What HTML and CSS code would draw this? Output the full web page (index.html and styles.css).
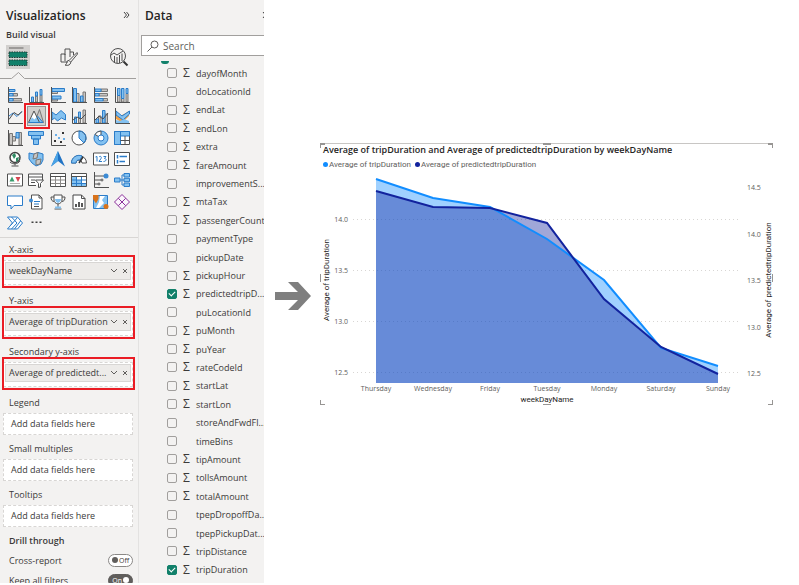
FILE: index.html
```
<!DOCTYPE html>
<html lang="en">
<head>
  <meta charset="UTF-8">
  <title>Power BI - Average of tripDuration by weekDayName</title>
  <link rel="stylesheet" href="styles.css">
</head>
<body>
  <div class="app">
    <section class="pane viz">
      <div class="pane-head">
        <h2>Visualizations</h2>
        <button class="collapse" aria-label="Collapse">
          <svg width="7" height="8" viewBox="0 0 7 8"><path d="M1 1l2.500 3L1 7M3.500 1L6 4 3.500 7"/></svg>
        </button>
      </div>
      <h3>Build visual</h3>
      <div class="tabs">
        <button class="on" aria-label="Build visual">
          <svg width="24" height="24" viewBox="0 0 24 24">
            <path d="M3 3h14.500" stroke="#8a8886" stroke-width="1.500"/>
            <path d="M3 7h18v5.500H3zM3 15h18v5.500H3z" fill="#11806a" stroke="#1f3d36" stroke-dasharray="1.500 1"/>
          </svg>
        </button>
        <button aria-label="Format visual">
          <svg width="20" height="20" viewBox="0 0 20 20">
            <path class="k" d="M9 15H2V7h4v7M6 8V2h5v8M11 5h3.500v3"/>
            <path class="k" d="M18 5.500l-8 8 1.700 1.700L18.500 7zM10 13.500c-2-.2-2.300 1.500-2.500 3-.1 1-1 1.500-1.500 1.500 3 1 5.700 0 5.700-2.800"/>
          </svg>
        </button>
        <button aria-label="Analytics">
          <svg width="20" height="20" viewBox="0 0 20 20">
            <circle class="k" cx="9" cy="9" r="7.500"/>
            <path class="k" d="M2 8l3-2 3 2 6-4M5.500 9v6M8 10v6M10.500 8v8M13 6.500v7.500"/>
            <path d="M14.500 14.500l4 4" stroke="#333" stroke-width="2"/>
          </svg>
        </button>
      </div>
      <svg class="notch" width="136" height="8" viewBox="0 0 136 8"><path d="M0 6.500h11.500l7-6 6 6H136"/></svg>

      <div class="gallery">
        <button aria-label="Stacked bar chart"><svg viewBox="0 0 16 16"><path class="g" d="M6 6.500h4.500v2.500H6zM6 11.500h8.500v2.500H6z"/><path class="b" d="M2 2.500h6v2H2zM2 6.500h4v2.500H2zM2 11.500h4v2.500H2z"/><path class="k" d="M1.500 0v15.500H16"/></svg></button>
        <button aria-label="Stacked column chart"><svg viewBox="0 0 16 16"><path class="g" d="M7.500 9h2v6h-2zM12 8h2v7h-2z"/><path class="b" d="M3.500 10h2v5h-2zM7.500 5h2v4h-2zM12 2.500h2V8h-2z"/><path class="k" d="M1.500 0v15.500H16"/></svg></button>
        <button aria-label="Clustered bar chart"><svg viewBox="0 0 16 16"><path class="g" d="M2 4.500h5.500v2H2zM2 12h5.500v2H2z"/><path class="b" d="M2 1.500h12.500v3H2zM2 9h9v3H2z"/><path class="k" d="M1.500 0v15.500H16"/></svg></button>
        <button aria-label="Clustered column chart"><svg viewBox="0 0 16 16"><path class="g" d="M5.500 6.500H8V15H5.500zM12 5h2.500v10H12z"/><path class="b" d="M2.500 1.500h3V15h-3zM9.500 9H12v6H9.500z"/><path class="k" d="M1.500 0v15.500H16"/></svg></button>
        <button aria-label="100% stacked bar chart"><svg viewBox="0 0 16 16"><path class="g" d="M8 2h6.500v2.500H8zM6 6.500h8.500V9H6zM10 11.500h4.500v2.500H10z"/><path class="b" d="M2 2h6v2.500H2zM2 6.500h4V9H2zM2 11.500h8v2.500H2z"/><path class="k" d="M1.500 0v15.500H16"/></svg></button>
        <button aria-label="100% stacked column chart"><svg viewBox="0 0 16 16"><path class="g" d="M3.500 8.500h2.500V15H3.500zM7.500 11.500H10V15H7.500zM12 6.500h2V15h-2z"/><path class="b" d="M3.500 1.500h2.500v7H3.500zM7.500 1.500H10v10H7.500zM12 1.500h2v5h-2z"/><path class="k" d="M1.500 0v15.500H16"/></svg></button>

        <button aria-label="Line chart"><svg viewBox="0 0 16 16"><path class="l" d="M2 8l4-3 4 3.500 5-5"/><path class="k" d="M1.500 0v15.500H16M2 11.500l5-7 4 2.500 4-3.500"/></svg></button>
        <button class="on" aria-label="Area chart"><svg viewBox="0 0 16 16"><path class="g" d="M6.500 14.500l5-13 4 13z"/><path d="M.5 14.500l5.500-11.500 5.500 11.500z" fill="#fff"/><path class="f" d="M.5 14.500L4 9.500l2.500 2 3-3.500 5.500 6.500z"/><path class="k" d="M.5 14.500l5.500-11.500 5.500 11.500"/><path class="l" d="M.5 14.500h14.500L9.500 8"/></svg></button>
        <button aria-label="Stacked area chart"><svg viewBox="0 0 16 16"><path class="b" d="M2 4l4 3 5-4.500 4.500 4V12l-4-2-4 3-3-3L2 12z"/><path class="k" d="M1.500 0v15.500H16"/></svg></button>
        <button aria-label="Line and stacked column chart"><svg viewBox="0 0 16 16"><path class="g" d="M7.500 10h2v5h-2zM12 2h2.500v13H12z"/><path class="b" d="M3.500 9h2v6h-2zM7.500 4h2v6h-2z"/><path class="k" d="M1.500 0v15.500H16M2 12l4-3 4 2 5-5"/></svg></button>
        <button aria-label="Line and clustered column chart"><svg viewBox="0 0 16 16"><path class="g" d="M5.500 8H8v7H5.500zM12 6h2.500v9H12z"/><path class="b" d="M3 11h2.500v4H3zM9.500 2.500H12V15H9.500z"/><path class="k" d="M1.500 0v15.500H16M2 12l4-4 4 3 5-6"/></svg></button>
        <button aria-label="Ribbon chart"><svg viewBox="0 0 16 16"><path d="M2 5l4 3 4-2 5-3v5l-4 4-4 2-5-3z" fill="#f0a046"/><path class="b" d="M2 3l6 5 7.500-5v3L9 12 2 7z"/><path class="f" d="M2 12l4 1 4-2 5 2v2H2z"/><path class="k" d="M1.500 0v15.500H16"/></svg></button>

        <button aria-label="Waterfall chart"><svg viewBox="0 0 16 16"><path class="g" d="M2.500 3.500h3V15h-3zM5.500 6.500h3V11h-3zM12 2.500h2.500V15H12z"/><path class="b" d="M9 2.500h3V8H9z"/><path class="k" d="M1.500 0v15.500H16"/></svg></button>
        <button aria-label="Funnel"><svg viewBox="0 0 16 16"><path class="b" d="M.5 1.500h15v4H.5zM3.500 5.500h9V9h-9zM5.500 9h5v5.500h-5z"/></svg></button>
        <button aria-label="Scatter chart"><svg viewBox="0 0 16 16"><path class="k" d="M1.500 0v15.500H16"/><path d="M4 10h2v2H4zM12 2h2v2h-2zM10 11h2v2h-2z" fill="#333"/><path d="M5 4h2v2H5zM8 7h2v2H8zM13 8h2v2h-2z" fill="#6aaee8"/></svg></button>
        <button aria-label="Pie chart"><svg viewBox="0 0 16 16"><circle cx="8" cy="8" r="7" fill="#fff"/><path class="f" d="M8 8V1a7 7 0 0 1 5 12z"/><circle class="k" cx="8" cy="8" r="7"/><path class="l" d="M8 1v7l5 5a7 7 0 0 0-5-12"/></svg></button>
        <button aria-label="Donut chart"><svg viewBox="0 0 16 16"><circle class="b" cx="8" cy="8" r="7"/><path d="M8 1A7 7 0 0 0 2 4.500L5.500 6.500 8 5z" fill="#fff" stroke="#505050"/><circle cx="8" cy="8" r="3" fill="#fff" stroke="#2b7cc9"/></svg></button>
        <button aria-label="Treemap"><svg viewBox="0 0 16 16"><path d="M.5 1.500h15v13H.5z" fill="#fff" stroke="#505050"/><path class="b" d="M.5 1.500h6v13h-6zM6.500 1.500h9V6h-9z"/><path class="k" d="M6.500 10.500h9M11 6v8.500"/></svg></button>

        <button aria-label="Map"><svg viewBox="0 0 16 16"><circle cx="8" cy="6.500" r="5" fill="#fff" stroke="#444" stroke-width="1.500"/><path d="M5 4l3-2 1 3-2 3zM9 7l3-1-1 4-2 1z" fill="#2e8b62"/><path class="k" d="M8 12v2.500M4.500 15h7M3 11c3 3 8 2 10-1"/></svg></button>
        <button aria-label="Filled map"><svg viewBox="0 0 16 16"><path class="b" d="M1 2l5 1 4-1.500L15 3v6l-2 4-5 2-4-3-3-4z"/><path class="g" d="M6 3l4-1.500L9 7 5 8zM8 9l5-1-1 5-4 1z"/></svg></button>
        <button aria-label="Azure map"><svg viewBox="0 0 16 16"><path d="M8 0l7 15.500-7-5.500-7 5.500z" fill="#2173c4"/><path d="M8 0L1 15.500 8 10z" fill="#4aa3e6"/></svg></button>
        <button aria-label="Gauge"><svg viewBox="0 0 16 16"><path d="M.5 12a7.500 7.500 0 0 1 15 0H11a3 3 0 0 0-6 0z" fill="#fff" stroke="#505050"/><path class="b" d="M.5 12A7.500 7.500 0 0 1 11 5L9 9a3 3 0 0 0-4 3z"/><path d="M8 12l4-6" stroke="#333" stroke-width="1.500"/></svg></button>
        <button aria-label="Card"><svg viewBox="0 0 16 16"><path d="M.5 2h15v12H.5z" fill="#fff" stroke="#505050"/><path class="l" d="M2.500 6l1.500-.5v5M6 6c1.500-1.500 3 0 2 1.500l-2 3h3M10.500 5.500H13L11.500 7.500c2.500 0 2 3-1 3"/></svg></button>
        <button aria-label="Multi-row card"><svg viewBox="0 0 16 16"><path d="M.5 1.500h15v13H.5z" fill="#fff" stroke="#505050"/><path d="M3.500 4v3.500M3.500 9v3.500" stroke="#2b7cc9" stroke-width="1.500"/><path d="M5.500 5.500H13M5.500 10.500H11" stroke="#2b7cc9" stroke-width="1.500"/></svg></button>

        <button aria-label="KPI"><svg viewBox="0 0 16 16"><path d="M.5 2h15v12H.5z" fill="#fff" stroke="#505050"/><path d="M2.500 9.500l2.500-5 2.500 5z" fill="#3a9d6e"/><path d="M8.500 5h5L11 10z" fill="#d64550"/><path d="M3 11.500h10" stroke="#b3b0ad"/></svg></button>
        <button aria-label="Slicer"><svg viewBox="0 0 16 16"><path d="M.5 2h14v11.500H.5z" fill="#fff"/><path class="k" d="M8 13.500H.5V2h14v6M.5 5h14M3 8h4M3 10.500h4"/><path d="M7.500 8h8l-3 3.500V15l-2 .5v-4z" fill="#fff" stroke="#505050"/></svg></button>
        <button aria-label="Table"><svg viewBox="0 0 16 16"><path d="M.5 1.500h15v13H.5z" fill="#fff"/><path d="M.5 8h15M.5 11.500h15M5.500 5v9.500M10.500 5v9.500" stroke="#8a8886"/><path class="k" d="M.5 1.500h15v13H.5zM.5 4.500h15"/></svg></button>
        <button aria-label="Matrix"><svg viewBox="0 0 16 16"><path d="M.5 1.500h15v13H.5z" fill="#fff"/><path class="f" d="M.5 4.500h5v10h-5zM5.500 8h5v6.500h-5zM10.500 11h5v3.500h-5z"/><path d="M.5 8h15M.5 11.500h15M5.500 5v9.500M10.500 5v9.500" stroke="#2b7cc9"/><path class="k" d="M.5 1.500h15v13H.5zM.5 4.500h15"/></svg></button>
        <button aria-label="Key influencers"><svg viewBox="0 0 16 16"><path class="k" d="M1.500 0v15.500H16M2 4h9M2 8h6M2 12h3"/><circle cx="13" cy="4" r="2.500" fill="#3b8ad4"/><circle class="k" cx="9" cy="8" r="1"/><circle class="k" cx="6" cy="12" r="1"/></svg></button>
        <button aria-label="Decomposition tree"><svg viewBox="0 0 16 16"><path class="l" d="M5 8h5M8 3v10M8 3h2M8 13h2"/><path class="b" d="M.5 6h5.500v4H.5zM10 1.500h5.500V5H10zM10 6.300h5.500v3.400H10zM10 11h5.500v3.500H10z"/></svg></button>

        <button aria-label="Q&amp;A"><svg viewBox="0 0 16 16"><path d="M.5 2h15v9.500H7l-3 3.500v-3.500H.5z" fill="#fff" stroke="#2b7cc9"/></svg></button>
        <button aria-label="Smart narrative"><svg viewBox="0 0 16 16"><path d="M3.500 1h7.500l3 3v11H3.500z" fill="#fff" stroke="#505050"/><path class="k" d="M11 1v3h3M6 12.500h5"/><path class="l" d="M6 7.500h6M6 10h5"/><circle cx="3" cy="6.500" r="2" fill="#3b8ad4"/></svg></button>
        <button aria-label="Goals"><svg viewBox="0 0 16 16"><path class="k" d="M4 3H1c0 3 1 4.500 3.500 4.500M12 3h3c0 3-1 4.500-3.500 4.500M8 9v4M4.500 15h7"/><path d="M4 1h8v5c0 2-1.500 3.500-4 4C5.500 9.500 4 8 4 6z" fill="#fff" stroke="#505050"/><path class="f" d="M5 5h6c0 2.500-1.500 3.500-3 4-1.500-.5-3-1.500-3-4zM5 12.500h6v2H5z"/></svg></button>
        <button aria-label="Paginated report"><svg viewBox="0 0 16 16"><path d="M2 1h8.500L14 4.500V15H2z" fill="#fff" stroke="#444"/><path class="k" d="M10.500 1v3.500H14"/><path d="M5 10v3M8 8v5M11 9v4" stroke="#222" stroke-width="1.500"/></svg></button>
        <button aria-label="ArcGIS map"><svg viewBox="0 0 16 16"><path class="b" d="M.5 1.500h14v13H.5z"/><path d="M7 2h5l-3 4 2 3-5 5H3l3-6z" fill="#fff"/><path d="M0 1h5.500v4L3 9.500 0 5z" fill="#d9731a"/><circle cx="13" cy="12.500" r="2.500" fill="#d9731a"/></svg></button>
        <button aria-label="Power Apps"><svg viewBox="0 0 16 16"><path d="M8 .5L15.500 8 8 15.500.5 8zM4.300 4.300l7.400 7.400M11.700 4.300l-7.400 7.400" fill="#fbf5fc" stroke="#8a2f99"/></svg></button>

        <button aria-label="Power Automate"><svg viewBox="0 0 16 16"><path d="M.5 2h10L15.500 8l-5 6H.5L5.500 8z" fill="#fff" stroke="#2b7cc9"/><path class="l" d="M4.500 2L10 8l-5.500 6M3.500 10.500L10.500 2.500M7.500 14L13.500 6"/></svg></button>
        <button aria-label="More visuals"><svg viewBox="0 0 16 16"><path d="M3.500 6.500H5.500V8H3.500zM7.500 6.500h2V8h-2zM11.500 6.500h2V8h-2z" fill="#404040"/></svg></button>
      </div>

      <div class="wells">
        <h4>X-axis</h4>
        <div class="well filled"><button class="pill"><span>weekDayName</span><svg width="22" height="8" viewBox="0 0 22 8"><path d="M3 2l3 3 3-3M15 2l4 4M19 2l-4 4"/></svg></button></div>
        <h4>Y-axis</h4>
        <div class="well filled"><button class="pill"><span>Average of tripDuration</span><svg width="22" height="8" viewBox="0 0 22 8"><path d="M3 2l3 3 3-3M15 2l4 4M19 2l-4 4"/></svg></button></div>
        <h4>Secondary y-axis</h4>
        <div class="well filled"><button class="pill"><span>Average of predictedt...</span><svg width="22" height="8" viewBox="0 0 22 8"><path d="M3 2l3 3 3-3M15 2l4 4M19 2l-4 4"/></svg></button></div>
        <h4>Legend</h4>
        <div class="well">Add data fields here</div>
        <h4>Small multiples</h4>
        <div class="well">Add data fields here</div>
        <h4>Tooltips</h4>
        <div class="well">Add data fields here</div>
        <h4 class="strong">Drill through</h4>
        <label class="toggle">Cross-report <input type="checkbox"><span class="switch">Off</span></label>
        <label class="toggle">Keep all filters <input type="checkbox" checked><span class="switch">On</span></label>
      </div>
    </section>

    <section class="pane data">
      <div class="pane-head">
        <h2>Data</h2>
        <button class="collapse" aria-label="Collapse">
          <svg width="7" height="8" viewBox="0 0 7 8"><path d="M1 1l2.500 3L1 7M3.500 1L6 4 3.500 7"/></svg>
        </button>
      </div>
      <div class="search">
        <svg width="12" height="12" viewBox="0 0 12 12"><circle cx="7.500" cy="4.500" r="3.500"/><path d="M5 7l-4.500 4.500"/></svg>
        <input type="text" placeholder="Search" aria-label="Search">
      </div>
      <div class="source"></div>
      <div class="fields">
        <label><input type="checkbox"><i>Σ</i>dayofMonth</label>
        <label><input type="checkbox"><i></i>doLocationId</label>
        <label><input type="checkbox"><i>Σ</i>endLat</label>
        <label><input type="checkbox"><i>Σ</i>endLon</label>
        <label><input type="checkbox"><i>Σ</i>extra</label>
        <label><input type="checkbox"><i>Σ</i>fareAmount</label>
        <label><input type="checkbox"><i></i>improvementS...</label>
        <label><input type="checkbox"><i>Σ</i>mtaTax</label>
        <label><input type="checkbox"><i>Σ</i>passengerCount</label>
        <label><input type="checkbox"><i></i>paymentType</label>
        <label><input type="checkbox"><i></i>pickupDate</label>
        <label><input type="checkbox"><i>Σ</i>pickupHour</label>
        <label><input type="checkbox" checked><i>Σ</i>predictedtripD...</label>
        <label><input type="checkbox"><i></i>puLocationId</label>
        <label><input type="checkbox"><i>Σ</i>puMonth</label>
        <label><input type="checkbox"><i>Σ</i>puYear</label>
        <label><input type="checkbox"><i>Σ</i>rateCodeId</label>
        <label><input type="checkbox"><i>Σ</i>startLat</label>
        <label><input type="checkbox"><i>Σ</i>startLon</label>
        <label><input type="checkbox"><i></i>storeAndFwdFl...</label>
        <label><input type="checkbox"><i></i>timeBins</label>
        <label><input type="checkbox"><i>Σ</i>tipAmount</label>
        <label><input type="checkbox"><i>Σ</i>tollsAmount</label>
        <label><input type="checkbox"><i>Σ</i>totalAmount</label>
        <label><input type="checkbox"><i></i>tpepDropoffDa...</label>
        <label><input type="checkbox"><i></i>tpepPickupDat...</label>
        <label><input type="checkbox"><i>Σ</i>tripDistance</label>
        <label><input type="checkbox" checked><i>Σ</i>tripDuration</label>
      </div>
    </section>

    <main>
      <svg class="arrow" width="38" height="30" viewBox="0 0 38 30"><path d="M1 11h23L14 1h10l13 14-13 14H14l10-10H1z" fill="#7f7f7f"/></svg>
      <div class="visual">
        <h1>Average of tripDuration and Average of predictedtripDuration by weekDayName</h1>
        <div class="legend">
          <span class="dot light"></span>Average of tripDuration
          <span class="dot dark"></span>Average of predictedtripDuration
        </div>
        <svg class="plot" viewBox="0 0 453 234">
          <g class="grid">
            <path d="M33 48.500h388M33 99.500h388M33 150.500h388M33 201.500h388"/>
          </g>
          <path d="M56 8L113 27 170 36 227 68 284 109 341 177 398 195V212H56z" fill="#118dff" fill-opacity=".4"/>
          <path d="M56 20L113 36 170 37 227 52 284 128 341 176 398 203V212H56z" fill="#12239e" fill-opacity=".4"/>
          <path class="line" d="M56 8L113 27 170 36 227 68 284 109 341 177 398 195" stroke="#118dff"/>
          <path class="line" d="M56 20L113 36 170 37 227 52 284 128 341 176 398 203" stroke="#12239e"/>
          <g class="ticks" text-anchor="end">
            <text x="28" y="51">14.0</text>
            <text x="28" y="102">13.5</text>
            <text x="28" y="153">13.0</text>
            <text x="28" y="204">12.5</text>
          </g>
          <g class="ticks">
            <text x="427" y="19">14.5</text>
            <text x="427" y="66">14.0</text>
            <text x="427" y="112">13.5</text>
            <text x="427" y="159">13.0</text>
            <text x="427" y="205">12.5</text>
          </g>
          <g class="ticks" text-anchor="middle">
            <text x="56" y="220">Thursday</text>
            <text x="113" y="220">Wednesday</text>
            <text x="170" y="220">Friday</text>
            <text x="227" y="220">Tuesday</text>
            <text x="284" y="220">Monday</text>
            <text x="341" y="220">Saturday</text>
            <text x="398" y="220">Sunday</text>
          </g>
          <g class="axis" text-anchor="middle">
            <text x="227" y="231">weekDayName</text>
            <text transform="translate(9 109) rotate(-90)">Average of tripDuration</text>
            <text transform="translate(451 109) rotate(-90)">Average of predictedtripDuration</text>
          </g>
        </svg>
        <!-- selection handles -->
        <span class="handle tl"></span>
        <span class="handle tm"></span>
        <span class="handle tr"></span>
        <span class="handle ml"></span>
        <span class="handle mr"></span>
        <span class="handle bl"></span>
        <span class="handle bm"></span>
        <span class="handle br"></span>
      </div>
    </main>
  </div>
</body>
</html>
```
FILE: styles.css
```
* {
  margin: 0;
  padding: 0;
  box-sizing: border-box;
}
body {
  background: #fff;
  color: #3b3a39;
  font-family: "Open Sans", "Noto Sans", sans-serif;
  font-size: 10px;
}
button {
  background: none;
  border: 0;
  color: inherit;
  font: inherit;
}
svg {
  display: block;
  fill: none;
}
.app {
  display: flex;
  height: calc(100vh - 2px);
  overflow: hidden;
}
.pane {
  flex: none;
  display: flex;
  flex-direction: column;
  background: #f3f2f1;
  overflow: hidden;
}
.viz {
  width: 139px;
  border-right: 1px solid #e3e2e1;
}
.data {
  width: 125px;
}
.pane-head {
  display: flex;
  align-items: center;
  justify-content: space-between;
  height: 28px;
  padding: 2px 8px 0 6px;
  flex: none;
}
.data .pane-head {
  padding-right: 0;
}
.data .collapse {
  width: 2px;
  overflow: hidden;
}
h2 {
  font-size: 12px;
  font-weight: 600;
  color: #252423;
}
.collapse svg {
  stroke: #444;
}
h3 {
  padding-left: 6px;
  font-size: 9px;
  line-height: 14px;
  font-weight: 600;
}
.tabs {
  display: flex;
  justify-content: space-between;
  padding: 3px 7px 0 6px;
}
.tabs button {
  width: 24px;
  height: 24px;
  display: flex;
  align-items: center;
  justify-content: center;
}
.tabs .on {
  background: #d2d0ce;
}
.notch {
  flex: none;
  margin-top: 3px;
  stroke: #a19f9d;
}

/* chart type icons */
.gallery {
  flex: none;
  display: grid;
  grid-template-columns: repeat(6, 1fr);
  grid-template-rows: repeat(7, 1fr);
  height: 150px;
  margin: 4px 5px 3px 4px;
}
.gallery button {
  display: flex;
  align-items: center;
  justify-content: center;
}
.gallery svg {
  flex: none;
  width: 16px;
  height: 16px;
}
.gallery .on {
  position: relative;
  background: #d2d0ce;
  border: 1px solid #979593;
  margin: 1px;
}
.gallery .on::after {
  content: "";
  position: absolute;
  inset: -4px -5px -4px -4px;
  border: 2px solid #ea1c24;
}
.k {
  stroke: #505050;
  fill: none;
}
.l {
  stroke: #2b7cc9;
  fill: none;
}
.b {
  fill: #83c1f0;
  stroke: #2b7cc9;
}
.g {
  fill: #c8c6c4;
  stroke: #797775;
}
.f {
  fill: #83c1f0;
}

.wells {
  border-top: 1px solid #d8d6d4;
  padding: 5px 5px 0 3px;
}
h4 {
  padding-left: 6px;
  font-size: 9px;
  line-height: 14px;
  font-weight: 400;
}
h4.strong {
  font-weight: 600;
}
.well {
  height: 22px;
  margin: 3px 0 7px;
  padding-left: 7px;
  background: #fff;
  border: 1px dashed #d8d6d4;
  line-height: 20px;
  font-size: 9px;
}
.well.filled {
  position: relative;
  height: 25px;
  margin-bottom: 9px;
  padding: 1px 1px 0;
}
.well.filled::after {
  content: "";
  position: absolute;
  inset: -6px -3px -4px -2px;
  border: 2px solid #ea1c24;
}
.pill {
  display: flex;
  align-items: center;
  justify-content: space-between;
  width: 100%;
  height: 18px;
  padding: 0 0 0 3px;
  background: #edebe9;
  border: 1px solid #d8d6d4;
  font-size: 9px;
  white-space: nowrap;
}
.pill svg {
  flex: none;
  stroke: #605e5c;
}
.toggle {
  display: flex;
  align-items: center;
  justify-content: space-between;
  height: 20px;
  padding-left: 6px;
  font-size: 9px;
}
h4.strong + .toggle {
  margin-top: 2px;
}
.toggle input {
  position: absolute;
  opacity: 0;
}
.switch {
  display: flex;
  align-items: center;
  gap: 1px;
  width: 25px;
  height: 13px;
  padding-left: 3px;
  border: 1px solid #8a8886;
  border-radius: 7px;
  background: #fff;
  font-size: 7px;
}
.switch::before {
  content: "";
  flex: none;
  width: 6px;
  height: 6px;
  border-radius: 50%;
  background: #605e5c;
}
input:checked + .switch {
  flex-direction: row-reverse;
  padding: 0 3px;
  background: #605e5c;
  border-color: #605e5c;
  color: #fff;
}
input:checked + .switch::before {
  background: #fff;
}

.search {
  flex: none;
  display: flex;
  align-items: center;
  gap: 4px;
  height: 21px;
  margin: 7px 0 0 2px;
  padding-left: 5px;
  background: #fff;
  border: 1px solid #a19f9d;
  border-right: 0;
}
.search svg {
  flex: none;
  stroke: #605e5c;
}
.search input {
  width: 100%;
  border: 0;
  outline: 0;
  font: inherit;
  background: none;
}
.search input::placeholder {
  color: #605e5c;
}
.source {
  flex: none;
  width: 8px;
  height: 3px;
  margin: 5px 0 0 22px;
  border-radius: 0 0 4px 4px;
  background: #11806a;
}
.fields {
  flex: 1;
  display: grid;
  grid-auto-rows: minmax(18px, 1fr);
  padding: 0 0 4px 28px;
}
.fields label {
  display: flex;
  align-items: center;
  font-size: 9px;
  white-space: nowrap;
}
.fields input {
  appearance: none;
  flex: none;
  width: 10px;
  height: 10px;
  border: 1px solid #a19f9d;
  border-radius: 2px;
}
.fields input:checked {
  background: #11806a;
  border-color: #11806a;
}
.fields input:checked::before {
  content: "";
  display: block;
  width: 5px;
  height: 3px;
  margin: 1px;
  border: solid #fff;
  border-width: 0 0 1px 1px;
  transform: rotate(-45deg);
}
.fields i {
  flex: none;
  width: 19px;
  padding-left: 6px;
  font-size: 12px;
  line-height: 12px;
  font-style: normal;
}

main {
  flex: 1;
  display: flex;
  align-items: center;
  padding: 0 26px 0 10px;
}
.arrow {
  flex: none;
  margin: 8px 8px 0 0;
}
.visual {
  flex: 1;
  position: relative;
  margin-bottom: 36px;
  border-top: 1px solid #c8c6c4;
}
h1 {
  padding-left: 3px;
  font-size: 9px;
  line-height: 11px;
  font-weight: 600;
  color: #252423;
  white-space: nowrap;
}
.legend {
  display: flex;
  align-items: center;
  height: 16px;
  padding: 4px 0 0 3px;
  font-family: Roboto, sans-serif;
  font-size: 8px;
  color: #605e5c;
  white-space: nowrap;
}
.dot {
  width: 5px;
  height: 5px;
  border-radius: 50%;
  margin-right: 1px;
}
.light {
  background: #118dff;
}
.dark {
  background: #12239e;
  margin-left: 4px;
}
.plot {
  width: 100%;
}
.grid path {
  stroke: #d8d6d4;
  stroke-dasharray: 1 3;
}
.line {
  stroke-width: 2;
}
.ticks text {
  font-size: 7px;
  fill: #605e5c;
}
.axis text {
  font-family: Roboto, sans-serif;
  font-size: 8px;
  fill: #252423;
}
.handle {
  position: absolute;
  width: 5px;
  height: 5px;
  border: 0 solid #979593;
}
.tl {
  top: -1px;
  left: 0;
  border-width: 2px 0 0 1px;
}
.tm {
  top: -1px;
  left: 50%;
  width: 8px;
  margin-left: -4px;
  border-top-width: 2px;
}
.tr {
  top: -1px;
  right: 0;
  border-width: 2px 1px 0 0;
}
.ml, .mr {
  top: 50%;
  height: 8px;
}
.ml {
  left: 0;
  border-left-width: 1px;
}
.mr {
  right: 0;
  border-right-width: 1px;
}
.bl {
  bottom: 0;
  left: 0;
  border-width: 0 0 1px 1px;
}
.bm {
  bottom: 0;
  left: 50%;
  width: 8px;
  margin-left: -4px;
  border-bottom-width: 1px;
}
.br {
  bottom: 0;
  right: 0;
  border-width: 0 1px 1px 0;
}
```
